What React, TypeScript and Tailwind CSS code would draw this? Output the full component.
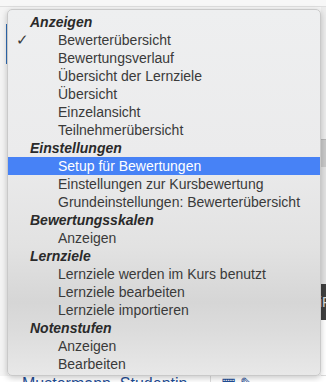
import React from "react";

type Entry = { label: string; header?: boolean; checked?: boolean; active?: boolean };

const entries: Entry[] = [
  { label: "Anzeigen", header: true },
  { label: "Bewerterübersicht", checked: true },
  { label: "Bewertungsverlauf" },
  { label: "Übersicht der Lernziele" },
  { label: "Übersicht" },
  { label: "Einzelansicht" },
  { label: "Teilnehmerübersicht" },
  { label: "Einstellungen", header: true },
  { label: "Setup für Bewertungen", active: true },
  { label: "Einstellungen zur Kursbewertung" },
  { label: "Grundeinstellungen: Bewerterübersicht" },
  { label: "Bewertungsskalen", header: true },
  { label: "Anzeigen" },
  { label: "Lernziele", header: true },
  { label: "Lernziele werden im Kurs benutzt" },
  { label: "Lernziele bearbeiten" },
  { label: "Lernziele importieren" },
  { label: "Notenstufen", header: true },
  { label: "Anzeigen" },
  { label: "Bearbeiten" },
];

const MenuRow = ({ entry }: { entry: Entry }) => {
  if (entry.header) {
    return (
      <div className="h-[18px] flex items-center pl-[22px] font-bold italic text-[#2a2a2a]">
        {entry.label}
      </div>
    );
  }
  return (
    <div
      className={`h-[18px] flex items-center ${
        entry.active ? "bg-[#4782f6] text-white" : "text-[#3a3a3a]"
      }`}
    >
      <span className="w-[50px] pl-[8px] text-[15px]">{entry.checked ? "✓" : ""}</span>
      <span>{entry.label}</span>
    </div>
  );
};

export default function App() {
  return (
    <div className="relative w-[326px] h-[382px] overflow-hidden bg-[#f4f4f4] font-['Liberation_Sans',Arial,sans-serif]">
      {/* page behind the menu */}
      <div className="flex flex-col h-full">
        <div className="h-[7px] bg-[#f7f7f7] border-b border-[#dedede]" />
        <div className="flex flex-1">
          <div className="w-[6px]" />
          <div className="w-[2px] flex flex-col">
            <div className="h-[17px]" />
            <div className="h-[40px] bg-[#2f6cb3]" />
          </div>
          <div className="flex-1" />
          <div className="w-[5px] flex flex-col bg-[#ececec]">
            <div className="h-[132px]" />
            <div className="h-[28px] bg-[#c9c9c9] border-t border-[#b5b5b5]" />
            <div className="h-[117px] bg-[#e2e2e2]" />
            <div className="h-[36px] bg-[#3f3f3f] text-[#dddddd] text-[14px] leading-[36px] -ml-[2px]">iF</div>
            <div className="flex-1 bg-white border-b border-[#dddddd]" />
          </div>
        </div>
        <div className="h-[6px] bg-white flex items-start overflow-hidden">
          <div className="w-[210px] pl-[22px] text-[16px] leading-[15px] text-[#1f4e96]">
            Mustermann, Studentin
          </div>
          <div className="w-[70px] border-l border-[#dddddd] pl-[10px] text-[16px] leading-[15px] text-[#1f4e96]">
            ▦ ✎
          </div>
          <div className="flex-1 border-l border-[#dddddd]" />
        </div>
      </div>

      {/* dropdown menu overlay */}
      <div className="absolute left-[7px] top-[9px] w-[314px] h-[367px] rounded-[5px] border border-[#c9c9c9] shadow-[0_2px_6px_rgba(0,0,0,0.22)] bg-[linear-gradient(to_bottom,#eeeff0_0%,#ebebec_40%,#e2e2e2_65%,#d6d6d6_80%,#dcdcdc_88%,#e8e8e8_100%)] pt-[3px] text-[14px] overflow-hidden">
        {entries.map((e, i) => (
          <MenuRow key={i} entry={e} />
        ))}
      </div>
    </div>
  );
}
